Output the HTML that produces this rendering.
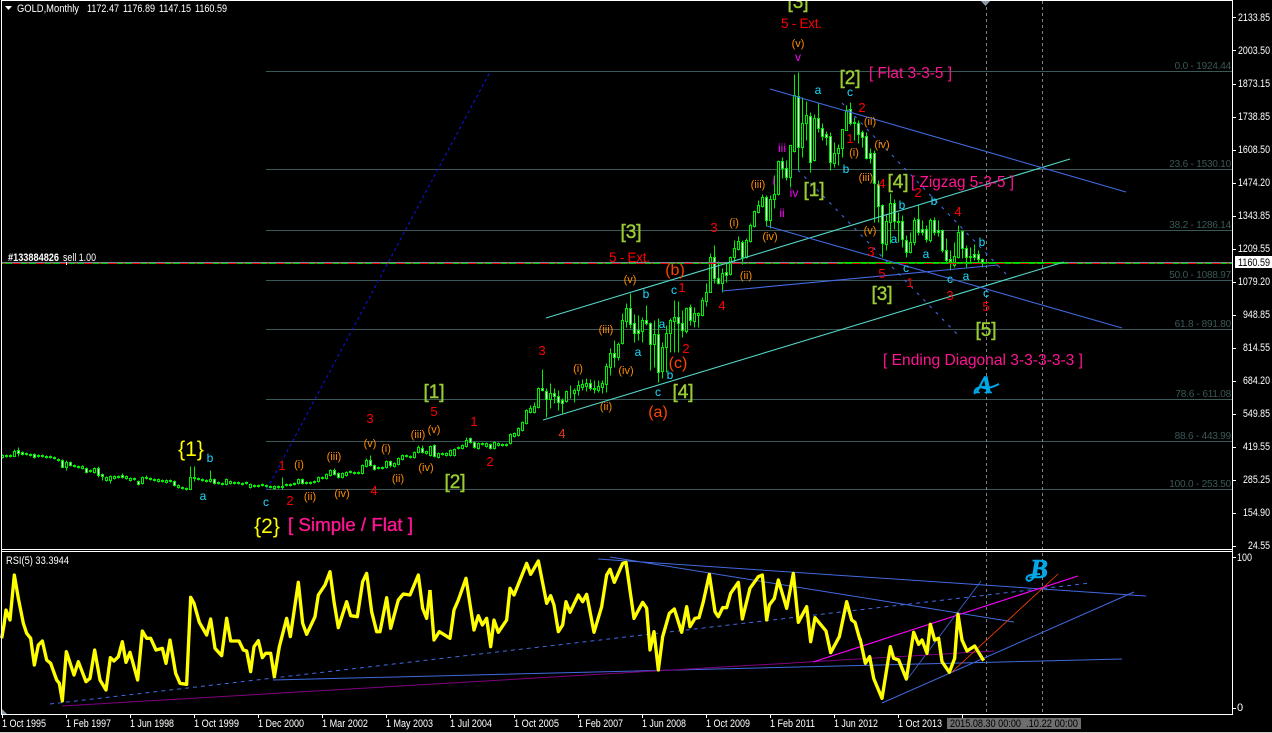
<!DOCTYPE html>
<html><head><meta charset="utf-8"><title>GOLD,Monthly</title>
<style>
html,body{margin:0;padding:0;background:#000;width:1272px;height:733px;overflow:hidden}
svg{display:block;position:absolute;left:0;top:0}
text{font-family:"Liberation Sans",sans-serif}
.w{fill:#fff;font-size:11px}
.f{fill:#3b5858;font-size:10px;letter-spacing:-.2px;text-anchor:end}
.o{fill:#ff8c00;font-size:11px;text-anchor:middle}
.r{fill:#f00;font-size:13px;text-anchor:middle}
.c{fill:#19dcff;font-size:12px;text-anchor:middle}
.m{fill:#f0f;font-size:12px;text-anchor:middle}
.g{fill:#9acd32;stroke:#9acd32;stroke-width:.4px;font-size:19px;text-anchor:middle}
.a{fill:#ff4500;font-size:16px;text-anchor:middle}
.p{fill:#ff1493;font-size:16px}
.y{fill:#ff0;font-size:21px;text-anchor:middle}
</style></head><body>
<svg width="1272" height="733" viewBox="0 0 1272 733" xmlns="http://www.w3.org/2000/svg">
<rect width="1272" height="733" fill="#000"/>

<!-- fib lines -->
<g stroke="#3b5858" stroke-width="1" shape-rendering="crispEdges">
<path d="M266 71.5H1232M266 169.5H1232M266 230.5H1232M266 280.5H1232M266 329.5H1232M266 399.5H1232M266 441.5H1232M266 489.5H1232"/>
</g>
<g>
<text class="f" x="1231" y="69">0.0 - 1924.44</text>
<text class="f" x="1231" y="167">23.6  - 1530.10</text>
<text class="f" x="1231" y="228">38.2 - 1286.14</text>
<text class="f" x="1231" y="278">50.0 - 1088.97</text>
<text class="f" x="1231" y="327">61.8 - 891.80</text>
<text class="f" x="1231" y="397">78.6 - 611.08</text>
<text class="f" x="1231" y="439">88.6 - 443.99</text>
<text class="f" x="1231" y="487">100.0 - 253.50</text>
</g>

<!-- verticals -->
<g stroke="#808080" stroke-dasharray="3 3" shape-rendering="crispEdges">
<path d="M986.5 1V714M1042.5 1V714"/>
</g>
<path d="M981 1H990L985.5 6Z" fill="#8a9aa8"/>

<!-- candles -->
<g shape-rendering="crispEdges" stroke="#00ee00" stroke-width="1">
<path transform="translate(.5 .5)" fill="none" d="M2 454V458M6 454V457M10 454V457M14 449V456M18 447V456M22 451V455M26 452V455M30 453V456M34 453V458M38 454V457M42 454V457M46 455V458M50 455V458M54 456V459M58 458V461M62 459V467M66 460V470M70 461V466M74 464V467M78 465V468M82 465V469M86 467V473M90 469V472M94 467V473M98 466V477M102 473V480M106 476V481M110 475V483M114 475V479M118 475V478M122 473V478M126 475V479M130 477V481M134 477V480M138 480V485M142 476V484M146 475V479M150 477V480M154 478V481M158 478V482M162 479V482M166 479V483M170 479V482M174 480V486M178 484V488M182 486V489M186 487V490M190 466V489M194 466V481M198 477V480M202 478V481M206 479V482M210 470V482M214 478V484M218 481V484M222 482V485M226 478V485M230 480V484M234 481V484M238 481V484M242 482V485M246 481V484M250 483V488M254 484V487M258 484V487M262 483V486M266 484V487M270 485V488M274 485V489M278 485V488M282 477V489M286 483V486M290 483V486M294 482V485M298 478V484M302 478V484M306 481V484M310 481V484M314 480V483M318 476V482M322 476V479M326 473V479M330 469V476M334 468V475M338 472V478M342 472V478M346 471V476M350 470V473M354 471V474M358 471V474M362 464V474M366 458V467M370 455V466M374 464V470M378 466V469M382 466V469M386 460V468M390 460V467M394 462V467M398 457V465M402 454V460M406 454V457M410 455V458M414 451V458M418 445V453M422 445V453M426 450V454M430 445V456M434 444V457M438 452V458M442 452V455M446 452V456M450 449V456M454 448V456M458 446V449M462 444V449M466 437V447M470 437V443M474 441V448M478 442V449M482 442V445M486 442V447M490 443V449M494 441V449M498 442V446M502 443V446M506 443V446M510 433V444M514 432V437M518 427V436M522 421V431M526 409V424M530 405V413M534 402V413M538 387V408M542 369V391M546 388V417M550 383V408M554 388V403M558 390V410M562 398V413M566 390V402M570 385V398M574 388V402M578 380V395M582 379V390M586 378V391M590 379V390M594 380V393M598 380V392M602 380V393M606 363V392M610 348V375M614 340V367M618 342V360M622 313V344M626 303V327M630 293V328M634 314V342M638 315V340M642 317V342M646 305V325M650 322V370M654 320V367M658 318V382M662 342V378M666 325V372M670 318V352M674 300V352M678 301V352M682 310V337M686 307V333M690 304V325M694 307V327M698 312V327M702 297V316M706 283V306M710 253V292M714 245V283M718 261V284M722 268V292M726 263V282M730 256V275M734 240V263M738 236V250M742 240V264M746 238V258M750 223V242M754 210V227M758 200V213M762 194V207M766 195V226M770 195V228M774 175V208M778 160V195M782 157V178M786 160V180M790 145V187M794 74V152M798 72V170M802 97V157M806 101V140M810 112V172M814 114V161M818 103V132M822 123V140M826 131V145M830 132V170M834 142V167M838 144V165M842 129V157M846 105V130M850 102V125M854 117V140M858 120V143M862 130V147M866 132V159M870 148V163M874 150V222M878 180V222M882 204V257M886 215V250M890 193V243M894 199V229M898 212V242M902 215V247M906 235V257M910 232V253M914 217V245M918 204V235M922 220V235M926 225V242M930 218V242M934 217V235M938 220V236M942 229V252M946 238V262M950 250V270M954 242V267M958 225V258M962 230V258M966 245V267M970 247V263M974 244V260M978 250V263M982 258V267"/>
<path transform="translate(1.5 .5)" fill="#000" d="M0 455h2V457h-2zM4 455h2V456h-2zM8 455h2V456h-2zM12 451h2V456h-2zM24 453h2V454h-2zM28 454h2V455h-2zM36 455h2V456h-2zM40 455h2V456h-2zM44 456h2V457h-2zM48 456h2V457h-2zM52 457h2V458h-2zM56 459h2V460h-2zM64 462h2V467h-2zM72 465h2V466h-2zM76 466h2V467h-2zM80 466h2V468h-2zM88 470h2V471h-2zM92 468h2V472h-2zM104 477h2V480h-2zM108 476h2V480h-2zM112 476h2V478h-2zM116 476h2V477h-2zM124 476h2V478h-2zM128 478h2V480h-2zM132 478h2V479h-2zM140 477h2V483h-2zM144 477h2V478h-2zM148 478h2V479h-2zM152 479h2V480h-2zM156 479h2V481h-2zM160 480h2V481h-2zM164 480h2V482h-2zM168 480h2V481h-2zM176 485h2V487h-2zM180 487h2V488h-2zM184 488h2V489h-2zM188 477h2V489h-2zM196 478h2V479h-2zM200 479h2V480h-2zM204 480h2V481h-2zM208 479h2V481h-2zM216 482h2V483h-2zM220 483h2V484h-2zM224 479h2V484h-2zM228 481h2V483h-2zM232 482h2V483h-2zM236 482h2V483h-2zM240 483h2V484h-2zM244 482h2V483h-2zM248 484h2V487h-2zM252 485h2V486h-2zM256 485h2V486h-2zM260 484h2V485h-2zM264 485h2V486h-2zM268 486h2V487h-2zM272 486h2V488h-2zM276 486h2V487h-2zM280 486h2V487h-2zM284 484h2V485h-2zM288 484h2V485h-2zM292 483h2V484h-2zM296 479h2V483h-2zM304 482h2V483h-2zM308 482h2V483h-2zM312 481h2V482h-2zM316 477h2V481h-2zM320 477h2V478h-2zM324 474h2V478h-2zM328 470h2V475h-2zM340 473h2V477h-2zM344 472h2V475h-2zM348 471h2V472h-2zM352 472h2V473h-2zM356 472h2V473h-2zM360 465h2V473h-2zM364 460h2V466h-2zM376 467h2V468h-2zM380 467h2V468h-2zM384 461h2V467h-2zM392 463h2V466h-2zM396 458h2V464h-2zM400 455h2V459h-2zM404 455h2V456h-2zM408 456h2V457h-2zM412 452h2V457h-2zM416 447h2V452h-2zM424 451h2V453h-2zM428 446h2V455h-2zM436 453h2V457h-2zM440 453h2V454h-2zM444 453h2V455h-2zM448 450h2V455h-2zM452 449h2V455h-2zM456 447h2V448h-2zM460 445h2V448h-2zM464 440h2V446h-2zM476 443h2V448h-2zM480 443h2V444h-2zM484 443h2V446h-2zM492 442h2V448h-2zM496 443h2V445h-2zM500 444h2V445h-2zM504 444h2V445h-2zM508 434h2V443h-2zM512 433h2V436h-2zM516 428h2V435h-2zM520 422h2V430h-2zM524 410h2V423h-2zM528 408h2V412h-2zM532 406h2V412h-2zM536 388h2V407h-2zM548 393h2V399h-2zM564 391h2V401h-2zM572 390h2V393h-2zM576 385h2V390h-2zM580 384h2V387h-2zM584 383h2V386h-2zM596 386h2V390h-2zM600 383h2V387h-2zM604 366h2V384h-2zM608 353h2V367h-2zM616 344h2V357h-2zM620 320h2V343h-2zM624 308h2V321h-2zM640 320h2V331h-2zM652 334h2V344h-2zM660 347h2V371h-2zM664 333h2V347h-2zM668 320h2V333h-2zM672 317h2V321h-2zM684 308h2V331h-2zM692 313h2V321h-2zM696 313h2V315h-2zM700 300h2V315h-2zM704 292h2V301h-2zM708 257h2V292h-2zM720 273h2V283h-2zM728 257h2V274h-2zM732 248h2V257h-2zM736 241h2V249h-2zM744 240h2V257h-2zM748 225h2V241h-2zM752 211h2V226h-2zM756 205h2V212h-2zM760 197h2V206h-2zM768 199h2V220h-2zM772 194h2V199h-2zM776 161h2V194h-2zM788 145h2V177h-2zM792 95h2V151h-2zM800 123h2V147h-2zM804 115h2V123h-2zM812 118h2V160h-2zM832 153h2V163h-2zM836 148h2V153h-2zM840 129h2V148h-2zM844 110h2V130h-2zM884 221h2V244h-2zM888 203h2V222h-2zM896 221h2V222h-2zM908 242h2V252h-2zM912 220h2V242h-2zM928 220h2V240h-2zM952 256h2V265h-2zM956 232h2V257h-2z"/>
<path transform="translate(1.5 .5)" fill="#fff" d="M16 450h2V453h-2zM20 452h2V454h-2zM32 454h2V457h-2zM60 460h2V467h-2zM68 462h2V465h-2zM84 468h2V472h-2zM96 468h2V475h-2zM100 474h2V476h-2zM120 475h2V477h-2zM136 481h2V484h-2zM172 481h2V485h-2zM192 477h2V478h-2zM212 479h2V483h-2zM300 479h2V483h-2zM332 470h2V474h-2zM336 473h2V477h-2zM368 460h2V465h-2zM372 465h2V469h-2zM388 461h2V465h-2zM420 448h2V452h-2zM432 445h2V456h-2zM468 438h2V442h-2zM472 442h2V447h-2zM488 444h2V448h-2zM540 388h2V390h-2zM544 391h2V399h-2zM552 393h2V396h-2zM556 396h2V402h-2zM560 400h2V403h-2zM588 383h2V388h-2zM592 388h2V389h-2zM612 353h2V357h-2zM628 308h2V324h-2zM632 323h2V333h-2zM636 330h2V333h-2zM644 320h2V323h-2zM648 323h2V344h-2zM656 334h2V372h-2zM676 317h2V323h-2zM680 323h2V330h-2zM688 307h2V320h-2zM712 257h2V278h-2zM716 278h2V283h-2zM724 272h2V275h-2zM740 242h2V257h-2zM764 197h2V220h-2zM780 161h2V168h-2zM784 168h2V177h-2zM796 96h2V147h-2zM808 116h2V162h-2zM816 118h2V128h-2zM820 128h2V136h-2zM824 134h2V137h-2zM828 136h2V162h-2zM848 109h2V123h-2zM852 122h2V123h-2zM856 123h2V134h-2zM860 132h2V137h-2zM864 136h2V158h-2zM868 153h2V158h-2zM872 153h2V183h-2zM876 184h2V206h-2zM880 205h2V243h-2zM892 203h2V221h-2zM900 221h2V239h-2zM904 240h2V252h-2zM916 219h2V232h-2zM920 229h2V232h-2zM924 229h2V239h-2zM932 220h2V232h-2zM936 230h2V232h-2zM940 230h2V250h-2zM944 250h2V260h-2zM948 259h2V261h-2zM960 231h2V248h-2zM964 248h2V257h-2zM968 256h2V257h-2zM972 254h2V257h-2zM976 254h2V259h-2zM980 259h2V262h-2z"/>
</g>

<!-- current price lines -->
<g shape-rendering="crispEdges">
<rect x="2" y="262" width="1230" height="1" fill="#778899"/>
<rect x="840" y="262" width="225" height="1" fill="#00e000"/>
<rect x="2" y="263" width="1230" height="1" fill="#00c800"/>
<path d="M2 263.5H1232" stroke="#e01010" stroke-dasharray="2 7 9 6" stroke-dashoffset="-1" fill="none"/>
<rect x="66" y="262" width="1" height="3" fill="#fff"/>
</g>

<!-- trend lines -->
<g fill="none" stroke-width="1.1">
<path d="M546 318L1070 159M543 420L1064 262" stroke="#52d6c8"/>
<path d="M770 89L1126 192M767 226L1122 328M722 291L998 265" stroke="#4169e1"/>
<path d="M267 489L490 72" stroke="#0a14d8" stroke-dasharray="3 3"/>
<path d="M798 170L958 335M842 103L1006 274" stroke="#4169e1" stroke-dasharray="3 6"/>
</g>

<!-- wave labels -->
<g>
<text class="y" x="191" y="456">{1}</text>
<text class="y" x="267" y="533">{2}</text>
<text x="288" y="531" fill="#ff1493" stroke="#ff1493" stroke-width=".35" font-size="18" textLength="125" lengthAdjust="spacingAndGlyphs">[ Simple / Flat ]</text>
<text class="g" x="434" y="398">[1]</text>
<text class="g" x="455" y="488">[2]</text>
<text class="g" x="631" y="238">[3]</text>
<text class="g" x="683" y="398">[4]</text>
<text class="g" x="798" y="8">[3]</text>
<text class="g" x="850" y="84">[2]</text>
<text class="g" x="814" y="196">[1]</text>
<text class="g" x="898" y="188">[4]</text>
<text class="g" x="882" y="300">[3]</text>
<text class="g" x="986" y="336">[5]</text>
<text x="781" y="28" fill="#f00" font-size="13.5" textLength="41">5 - Ext.</text>
<text x="609" y="262" fill="#f00" font-size="13.5" textLength="41">5 - Ext.</text>
<text x="869" y="78" class="p" textLength="83" lengthAdjust="spacingAndGlyphs">[ Flat 3-3-5 ]</text>
<text x="911" y="187" class="p" textLength="103" lengthAdjust="spacingAndGlyphs">[ Zigzag 5-3-5 ]</text>
<text x="883" y="365" class="p" textLength="200" lengthAdjust="spacingAndGlyphs">[ Ending Diagonal 3-3-3-3-3 ]</text>
<text x="976" y="393" fill="#00a8e8" stroke="#00a8e8" stroke-width=".6" font-size="25" font-weight="bold" font-style="italic" style="font-family:'Liberation Serif',serif">A</text>
<path d="M975 394C973 390 978 386 984 388C988 389 993 387 999 384" fill="none" stroke="#00a8e8" stroke-width="2"/>
<text x="1030" y="578" fill="#00a8e8" stroke="#00a8e8" stroke-width=".6" font-size="27" font-weight="bold" font-style="italic" style="font-family:'Liberation Serif',serif">B</text>
<path d="M1034 577C1030 583 1025 581 1027 577C1029 574 1034 575 1040 574" fill="none" stroke="#00a8e8" stroke-width="2"/>

<text class="r" x="282" y="470">1</text><text class="r" x="290" y="505">2</text><text class="r" x="370" y="423">3</text><text class="r" x="374" y="495">4</text><text class="r" x="434" y="416">5</text><text class="r" x="474" y="426">1</text><text class="r" x="490" y="466">2</text><text class="r" x="542" y="355">3</text><text class="r" x="562" y="438" style="fill:#e23a10">4</text><text class="r" x="682" y="292">1</text><text class="r" x="686" y="353">2</text><text class="r" x="714" y="232">3</text><text class="r" x="722" y="310">4</text><text class="r" x="862" y="112">2</text><text class="r" x="850" y="143">1</text><text class="r" x="882" y="188">4</text><text class="r" x="918" y="197">2</text><text class="r" x="958" y="216">4</text><text class="r" x="871" y="256">3</text><text class="r" x="882" y="278">5</text><text class="r" x="910" y="287">1</text><text class="r" x="950" y="300">3</text><text class="r" x="986" y="311">5</text>

<text class="o" x="299" y="468">(i)</text><text class="o" x="310" y="500">(ii)</text><text class="o" x="334" y="460">(iii)</text><text class="o" x="342" y="497">(iv)</text><text class="o" x="370" y="447">(v)</text><text class="o" x="386" y="452">(i)</text><text class="o" x="398" y="482">(ii)</text><text class="o" x="418" y="438">(iii)</text><text class="o" x="434" y="433">(v)</text><text class="o" x="426" y="471">(iv)</text><text class="o" x="578" y="372">(i)</text><text class="o" x="606" y="410">(ii)</text><text class="o" x="606" y="333">(iii)</text><text class="o" x="626" y="374">(iv)</text><text class="o" x="630" y="283">(v)</text><text class="o" x="734" y="226">(i)</text><text class="o" x="746" y="279">(ii)</text><text class="o" x="758" y="188">(iii)</text><text class="o" x="770" y="240">(iv)</text><text class="o" x="798" y="47">(v)</text><text class="o" x="870" y="125">(ii)</text><text class="o" x="854" y="156">(i)</text><text class="o" x="882" y="148">(iv)</text><text class="o" x="866" y="181">(iii)</text><text class="o" x="870" y="234">(v)</text>

<text class="a" x="658" y="417">(a)</text><text class="a" x="675" y="275">(b)</text><text class="a" x="678" y="368">(c)</text>

<text class="c" x="203" y="500">a</text><text class="c" x="210" y="462">b</text><text class="c" x="266" y="506">c</text><text class="c" x="818" y="94">a</text><text class="c" x="850" y="96">c</text><text class="c" x="846" y="173">b</text><text class="c" x="646" y="298">b</text><text class="c" x="674" y="294">c</text><text class="c" x="638" y="356">a</text><text class="c" x="662" y="328">a</text><text class="c" x="670" y="379">b</text><text class="c" x="658" y="396">c</text><text class="c" x="902" y="209">b</text><text class="c" x="934" y="205">b</text><text class="c" x="894" y="243">a</text><text class="c" x="926" y="258">a</text><text class="c" x="906" y="272">c</text><text class="c" x="982" y="246">b</text><text class="c" x="950" y="283">c</text><text class="c" x="966" y="280">a</text><text class="c" x="986" y="297">c</text>

<text class="m" x="798" y="61">v</text><text class="m" x="782" y="152">iii</text><text class="m" x="774" y="185">i</text><text class="m" x="794" y="197">iv</text><text class="m" x="782" y="217">ii</text>
</g>

<!-- header -->
<path d="M5 6H12L8.5 10Z" fill="#fff"/>
<text class="w" x="17" y="12" textLength="62" lengthAdjust="spacingAndGlyphs">GOLD,Monthly</text>
<text class="w" x="87" y="12" textLength="32" lengthAdjust="spacingAndGlyphs">1172.47</text><text class="w" x="123" y="12" textLength="32" lengthAdjust="spacingAndGlyphs">1176.89</text><text class="w" x="159" y="12" textLength="32" lengthAdjust="spacingAndGlyphs">1147.15</text><text class="w" x="195" y="12" textLength="32" lengthAdjust="spacingAndGlyphs">1160.59</text>
<text class="w" x="8" y="261" font-weight="bold" textLength="51" lengthAdjust="spacingAndGlyphs">#133884826</text>
<text class="w" x="63" y="261" textLength="33" lengthAdjust="spacingAndGlyphs">sell 1.00</text>

<!-- RSI overlay lines -->
<g fill="none" stroke-width="1">
<path d="M50 704L1090 583" stroke="#4169e1" stroke-dasharray="4 4"/>
<path d="M273 680L1122 659M598 559L1146 596M610 557L1014 622M882 703L1134 592" stroke="#4169e1"/>
<path d="M906 681L981 581" stroke="#4169e1" stroke-width=".8"/>
<path d="M62 706L994 651" stroke="#800080"/>
<path d="M813 662L1078 576" stroke="#f0f" stroke-width="1.1"/>
<path d="M952 672L1058 574" stroke="#ff4500" stroke-width=".8"/>
</g>
<!-- RSI series -->
<g fill="none" stroke="#ff0" stroke-linejoin="round" stroke-width="10">
<polyline transform="translate(0 545) scale(.33333)" points="5,280 12,240 18,195 30,225 43,90 55,160 70,235 80,265 92,280 103,360 115,300 127,288 140,345 152,355 170,405 178,415 187,468 199,320 222,390 235,350 258,410 270,400 284,315 300,405 318,435 331,338 342,348 355,335 367,290 378,352 390,322 413,405 427,258 440,280 452,280 468,315 487,310 498,355 510,285 527,385 540,415 560,418 572,157 582,175 598,232 620,270 632,222 645,310 665,332 680,220 692,288 717,288 730,315 740,318 752,380 762,305 775,287 787,338 797,325 812,325 823,395 838,305 860,220 871,275 895,112 908,235 920,268 945,215 955,150 975,120 990,80 1002,170 1015,248 1040,170 1052,212 1072,215 1088,110 1100,85 1115,200 1130,260 1140,260 1160,158 1172,250 1195,165 1210,147 1230,150 1255,90 1268,190 1280,220 1290,135"/>
<polyline transform="translate(430 545) scale(.33333)" points="0,135 12,285 28,260 60,280 72,195 85,165 108,100 132,255 145,212 157,240 170,220 182,305 192,225 205,262 230,225 240,130 252,150 290,55 302,88 325,48 350,175 362,152 372,180 385,260 398,240 408,170 420,202 445,150 458,170 470,148 492,262 515,185 530,90 540,73 553,112 578,55 588,52 612,220 638,172 650,190 660,315 672,260 685,375 698,275 718,205 733,192 755,262 770,185 780,245 795,220 807,218 820,170 838,88 855,200 865,215 878,188 890,188 902,145 925,112 937,222 960,130 985,95 997,90 1010,225 1018,180 1033,160 1045,105 1070,190 1090,85 1105,232 1130,185 1142,290 1155,218 1188,258 1202,323 1228,275 1250,170 1265,225 1275,232 1290,285"/>
<polyline transform="translate(842 545) scale(.33333)" points="54,280 70,355 83,335 95,400 120,460 145,305 155,340 170,345 193,402 215,262 230,298 240,285 255,325 265,238 278,285 290,280 300,350 322,382 338,340 348,208 360,285 375,318 398,303 425,347"/>
</g>
<path d="M2 709L7 714H2Z" fill="#8a9aa8"/>

<!-- frames -->
<g fill="#fff" shape-rendering="crispEdges">
<rect x="1" y="0" width="1232" height="1"/>
<rect x="1" y="0" width="1" height="715"/>
<rect x="1232" y="0" width="1" height="715"/>
<rect x="1" y="549" width="1232" height="1"/>
<rect x="1" y="551" width="1232" height="1"/>
<rect x="1" y="714" width="1232" height="1"/>
<rect x="0" y="732" width="1272" height="1" fill="#d4d0c8"/>
<path d="M1233 17h3v1h-3zM1233 50h3v1h-3zM1233 84h3v1h-3zM1233 117h3v1h-3zM1233 150h3v1h-3zM1233 183h3v1h-3zM1233 216h3v1h-3zM1233 249h3v1h-3zM1233 282h3v1h-3zM1233 315h3v1h-3zM1233 348h3v1h-3zM1233 381h3v1h-3zM1233 414h3v1h-3zM1233 447h3v1h-3zM1233 480h3v1h-3zM1233 513h3v1h-3zM1233 546h3v1h-3zM1233 557h3v1h-3zM1233 708h3v1h-3z"/>
<path d="M2 715h1v3h-1zM66 715h1v3h-1zM130 715h1v3h-1zM194 715h1v3h-1zM258 715h1v3h-1zM322 715h1v3h-1zM386 715h1v3h-1zM450 715h1v3h-1zM514 715h1v3h-1zM578 715h1v3h-1zM642 715h1v3h-1zM706 715h1v3h-1zM770 715h1v3h-1zM834 715h1v3h-1zM898 715h1v3h-1zM962 715h1v3h-1z"/>
</g>

<!-- price axis -->
<g lengthAdjust="spacingAndGlyphs">
<text class="w" x="1238" y="21" textLength="32" lengthAdjust="spacingAndGlyphs">2133.85</text><text class="w" x="1238" y="54" textLength="32" lengthAdjust="spacingAndGlyphs">2003.50</text><text class="w" x="1238" y="87" textLength="32" lengthAdjust="spacingAndGlyphs">1873.15</text><text class="w" x="1238" y="120" textLength="32" lengthAdjust="spacingAndGlyphs">1738.85</text><text class="w" x="1238" y="153" textLength="32" lengthAdjust="spacingAndGlyphs">1608.50</text><text class="w" x="1238" y="186" textLength="32" lengthAdjust="spacingAndGlyphs">1474.20</text><text class="w" x="1238" y="219" textLength="32" lengthAdjust="spacingAndGlyphs">1343.85</text><text class="w" x="1238" y="252" textLength="32" lengthAdjust="spacingAndGlyphs">1209.55</text><text class="w" x="1238" y="285" textLength="32" lengthAdjust="spacingAndGlyphs">1079.20</text><text class="w" x="1243" y="318" textLength="27" lengthAdjust="spacingAndGlyphs">948.85</text><text class="w" x="1243" y="351" textLength="27" lengthAdjust="spacingAndGlyphs">814.55</text><text class="w" x="1243" y="384" textLength="27" lengthAdjust="spacingAndGlyphs">684.20</text><text class="w" x="1243" y="417" textLength="27" lengthAdjust="spacingAndGlyphs">549.85</text><text class="w" x="1243" y="450" textLength="27" lengthAdjust="spacingAndGlyphs">419.55</text><text class="w" x="1243" y="483" textLength="27" lengthAdjust="spacingAndGlyphs">285.25</text><text class="w" x="1243" y="516" textLength="27" lengthAdjust="spacingAndGlyphs">154.90</text><text class="w" x="1248" y="549" textLength="22" lengthAdjust="spacingAndGlyphs">24.55</text>
<rect x="1235" y="256" width="37" height="12" fill="#fff"/>
<text x="1238" y="266" font-size="11" fill="#000" textLength="32" lengthAdjust="spacingAndGlyphs">1160.59</text>
<text class="w" x="1237" y="561" textLength="15" lengthAdjust="spacingAndGlyphs">100</text><text class="w" x="1237" y="711">0</text>
<text class="w" x="6" y="564" textLength="63" lengthAdjust="spacingAndGlyphs">RSI(5) 33.3944</text>
</g>

<!-- time axis -->
<g>
<text class="w" x="2" y="727" textLength="44" lengthAdjust="spacingAndGlyphs">1 Oct 1995</text><text class="w" x="66" y="727" textLength="45" lengthAdjust="spacingAndGlyphs">1 Feb 1997</text><text class="w" x="130" y="727" textLength="44" lengthAdjust="spacingAndGlyphs">1 Jun 1998</text><text class="w" x="194" y="727" textLength="45" lengthAdjust="spacingAndGlyphs">1 Oct 1999</text><text class="w" x="258" y="727" textLength="46" lengthAdjust="spacingAndGlyphs">1 Dec 2000</text><text class="w" x="322" y="727" textLength="46" lengthAdjust="spacingAndGlyphs">1 Mar 2002</text><text class="w" x="386" y="727" textLength="47" lengthAdjust="spacingAndGlyphs">1 May 2003</text><text class="w" x="450" y="727" textLength="42" lengthAdjust="spacingAndGlyphs">1 Jul 2004</text><text class="w" x="514" y="727" textLength="45" lengthAdjust="spacingAndGlyphs">1 Oct 2005</text><text class="w" x="578" y="727" textLength="45" lengthAdjust="spacingAndGlyphs">1 Feb 2007</text><text class="w" x="642" y="727" textLength="44" lengthAdjust="spacingAndGlyphs">1 Jun 2008</text><text class="w" x="706" y="727" textLength="44" lengthAdjust="spacingAndGlyphs">1 Oct 2009</text><text class="w" x="770" y="727" textLength="45" lengthAdjust="spacingAndGlyphs">1 Feb 2011</text><text class="w" x="834" y="727" textLength="44" lengthAdjust="spacingAndGlyphs">1 Jun 2012</text><text class="w" x="898" y="727" textLength="44" lengthAdjust="spacingAndGlyphs">1 Oct 2013</text>
<rect x="947" y="718" width="134" height="11" fill="#6e6e6e"/>
<text x="950" y="727" font-size="11" fill="#000" textLength="71" lengthAdjust="spacingAndGlyphs">2015.08.30 00:00</text>
<text x="1026" y="727" font-size="11" fill="#000" textLength="52" lengthAdjust="spacingAndGlyphs">.10.22 00:00</text>
</g>
</svg>
</body></html>
